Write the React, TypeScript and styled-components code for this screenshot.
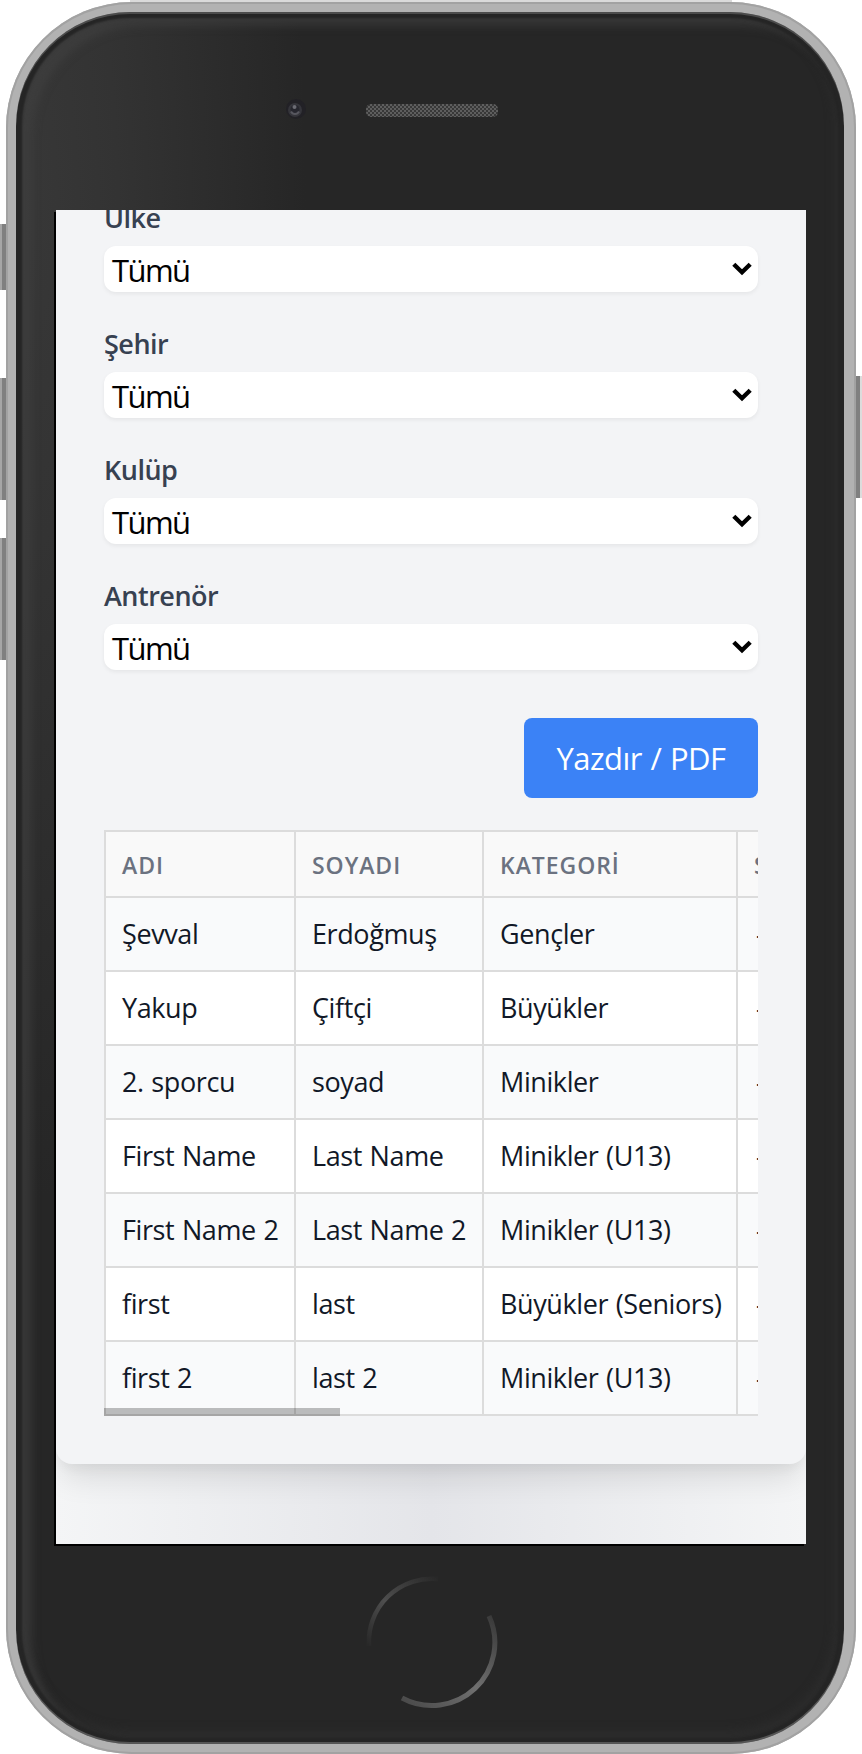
import React from 'react';
import styled, { createGlobalStyle } from 'styled-components';

const GlobalStyle = createGlobalStyle`
  *, *::before, *::after { box-sizing: border-box; }
  body { margin: 0; background: #fff; font-family: "Open Sans", "Noto Sans", sans-serif; }
`;

const Stage = styled.div`
  position: relative;
  width: 862px;
  height: 1754px;
  overflow: hidden;
  padding: 2px 6px 0;
`;

const SideButton = styled.div<{ $side: 'left' | 'right'; $top: number; $height: number }>`
  position: absolute;
  ${(p) => p.$side}: 0;
  top: ${(p) => p.$top}px;
  width: 8px;
  height: ${(p) => p.$height}px;
  background: linear-gradient(
    to ${(p) => (p.$side === 'left' ? 'right' : 'left')},
    ${(p) => (p.$side === 'left' ? '#a6a6a6' : '#dcdcdc')} 0 2px,
    #808080 2px
  );
`;

const Frame = styled.div`
  position: relative;
  width: 850px;
  height: 1752px;
  padding: 10px;
  border-radius: 126px;
  background: #b2b2b2;
  box-shadow: inset 0 0 0 2px #a2a2a2;

  &::before {
    content: '';
    position: absolute;
    top: -2px;
    left: 124px;
    right: 124px;
    height: 2px;
    background: #dadada;
  }
`;

const Glass = styled.div`
  display: flex;
  flex-direction: column;
  width: 828px;
  height: 1732px;
  padding: 0 38px 0 40px;
  border-radius: 114px;
  background: radial-gradient(ellipse 290px 1000px at 0 190px, #383838, #333 35%, #262626 100%) #262626;
  box-shadow:
    inset 0 2px 0 #4c4c4c,
    inset 0 -2px 0 #555,
    inset 0 0 2px 6px #252525,
    inset 12px 10px 8px 4px rgba(68, 68, 68, 0.55),
    inset -2px -6px 8px 8px rgba(46, 46, 46, 0.7);
`;

const TopBezel = styled.div`
  display: grid;
  grid-template-columns: 1fr 132px 1fr;
  align-items: center;
  height: 198px;
  flex: none;
  padding-left: 1px;
`;

const Lens = styled.svg`
  justify-self: end;
  margin: -2px 59px 0 0;
`;

const BottomBezel = styled.div`
  display: flex;
  flex: 1;
  justify-content: center;
  padding: 32px 0 0 2px;
`;

const Screen = styled.main`
  width: 750px;
  height: 1334px;
  flex: none;
  overflow: hidden;
  background: linear-gradient(to right, #f4f5f6, #e4e5e9 50%, #f4f5f6);
  box-shadow: -2px 2px 0 #000;
`;

const Panel = styled.section`
  height: 1254px;
  padding: 0 48px;
  border-radius: 0 0 16px 16px;
  background: #f3f4f6;
  box-shadow: 0 20px 30px -6px rgba(0, 0, 0, 0.1), 0 8px 12px -4px rgba(0, 0, 0, 0.05);
`;

const Filters = styled.div`
  display: flex;
  flex-direction: column;
  gap: 32px;
`;

const Field = styled.label`
  display: flex;
  flex-direction: column;
  gap: 8px;

  /* The list is scrolled, so the first caption runs under the top edge. */
  &:first-child { margin-top: -12px; }
`;

const FieldLabel = styled.span`
  height: 40px;
  color: #374151;
  font-size: 27px;
  font-weight: 600;
  line-height: 40px;
  letter-spacing: -0.5px;
  white-space: nowrap;
`;

const SelectBox = styled.span`
  display: flex;
  align-items: center;
  justify-content: space-between;
  height: 46px;
  padding: 0 6px 0 8px;
  border-radius: 12px;
  background: #fff;
  box-shadow: 0 2px 4px rgba(0, 0, 0, 0.06);
  color: #000;
  font-size: 31px;
  line-height: 46px;
  letter-spacing: -1.6px;
`;

const SelectValue = styled.span`
  padding-top: 2px;
`;

const Chevron = styled.svg`
  margin-top: -1px;
`;

const Actions = styled.div`
  display: flex;
  justify-content: flex-end;
  padding: 48px 0 32px;
`;

const PrintButton = styled.button`
  width: 234px;
  height: 80px;
  padding: 0;
  border: 0;
  border-radius: 8px;
  background: #3b82f6;
  color: #fff;
  font: 400 31px/48px "Open Sans", "Noto Sans", sans-serif;
  letter-spacing: -0.5px;
  word-spacing: 1px;
  white-space: nowrap;
`;

const TableViewport = styled.div`
  position: relative;
  width: 654px;
  overflow: hidden;
`;

const Table = styled.table`
  width: 930px;
  table-layout: fixed;
  border-spacing: 0;
  border-left: 2px solid #dcdcdc;
  border-top: 2px solid #dcdcdc;
`;

const HeadCell = styled.th`
  height: 66px;
  padding: 1px 16px 0;
  border-right: 2px solid #dcdcdc;
  border-bottom: 2px solid #dcdcdc;
  background: #f9f9f9;
  color: #6b7280;
  font-size: 23px;
  font-weight: 600;
  line-height: 32px;
  letter-spacing: 0.95px;
  text-align: left;
  white-space: nowrap;
`;

const Row = styled.tr`
  background: #fff;
  &:nth-child(odd) { background: #f9fafb; }
`;

const Cell = styled.td`
  height: 74px;
  padding: 0 16px;
  border-right: 2px solid #dcdcdc;
  border-bottom: 2px solid #dcdcdc;
  color: #111827;
  font-size: 27px;
  line-height: 40px;
  letter-spacing: -0.4px;
  word-spacing: 1px;
  white-space: nowrap;

  &:last-child { padding-left: 18px; }
`;

const ScrollThumb = styled.div`
  position: absolute;
  left: 0;
  bottom: 0;
  width: 236px;
  height: 8px;
  background: rgba(0, 0, 0, 0.25);
`;

const filters = ['Ülke', 'Şehir', 'Kulüp', 'Antrenör'];
const columns = ['ADI', 'SOYADI', 'KATEGORİ', 'SIKLET'];
const athletes = [
  ['Şevval', 'Erdoğmuş', 'Gençler', '-'],
  ['Yakup', 'Çiftçi', 'Büyükler', '-'],
  ['2. sporcu', 'soyad', 'Minikler', '-'],
  ['First Name', 'Last Name', 'Minikler (U13)', '-'],
  ['First Name 2', 'Last Name 2', 'Minikler (U13)', '-'],
  ['first', 'last', 'Büyükler (Seniors)', '-'],
  ['first 2', 'last 2', 'Minikler (U13)', '-'],
];

function Camera() {
  return (
    <Lens width="24" height="24" viewBox="0 0 24 24">
      <circle cx="13" cy="11" r="10" fill="#222126" />
      <circle cx="12" cy="12" r="7" fill="#35353b" />
      <circle cx="12" cy="11.5" r="4.5" fill="#26262e" />
      <path d="M8 13.5a4.5 4.5 0 0 0 8 0" fill="none" stroke="#57575f" strokeWidth="2" />
      <circle cx="11.5" cy="9" r="2" fill="#6c6c74" />
    </Lens>
  );
}

function Speaker() {
  return (
    <svg width="132" height="14" viewBox="0 0 132 14">
      <defs>
        <pattern id="mesh" width="4" height="4" patternUnits="userSpaceOnUse">
          <rect width="4" height="4" fill="#383838" />
          <rect width="2" height="2" fill="#5e5e5e" />
          <rect x="2" y="2" width="2" height="2" fill="#5e5e5e" />
        </pattern>
      </defs>
      <rect width="132" height="13" rx="5" fill="url(#mesh)" />
    </svg>
  );
}

function HomeButton() {
  return (
    <svg width="132" height="134" viewBox="0 0 132 134" fill="none">
      <defs>
        <linearGradient id="rimTop" x1="0" y1="1" x2="1" y2="0">
          <stop offset="0" stopColor="#282828" />
          <stop offset="0.45" stopColor="#4e4e4e" />
          <stop offset="1" stopColor="#282828" />
        </linearGradient>
        <linearGradient id="rimBottom" x1="1" y1="0" x2="0" y2="1">
          <stop offset="0" stopColor="#383838" />
          <stop offset="0.5" stopColor="#707070" />
          <stop offset="1" stopColor="#484848" />
        </linearGradient>
      </defs>
      <path d="M3 70A63 63 0 0 1 72 3" stroke="url(#rimTop)" strokeWidth="4.5" />
      <path d="M123 40A63 63 0 0 1 36 122" stroke="url(#rimBottom)" strokeWidth="5" />
    </svg>
  );
}

export default function App() {
  return (
    <>
      <GlobalStyle />
      <Stage>
        <SideButton $side="left" $top={224} $height={66} />
        <SideButton $side="left" $top={378} $height={122} />
        <SideButton $side="left" $top={538} $height={122} />
        <SideButton $side="right" $top={376} $height={122} />
        <Frame>
          <Glass>
            <TopBezel>
              <Camera />
              <Speaker />
            </TopBezel>
            <Screen>
              <Panel>
                <Filters>
                  {filters.map((name) => (
                    <Field key={name}>
                      <FieldLabel>{name}</FieldLabel>
                      <SelectBox>
                        <SelectValue>Tümü</SelectValue>
                        <Chevron width="20" height="14" viewBox="0 0 20 14">
                          <path d="M1.8 2.2 10 10.2 18.2 2.2" fill="none" stroke="#000" strokeWidth="4.4" />
                        </Chevron>
                      </SelectBox>
                    </Field>
                  ))}
                </Filters>
                <Actions>
                  <PrintButton>Yazdır / PDF</PrintButton>
                </Actions>
                <TableViewport>
                  <Table>
                    <colgroup>
                      <col style={{ width: 190 }} />
                      <col style={{ width: 188 }} />
                      <col style={{ width: 254 }} />
                      <col />
                    </colgroup>
                    <thead>
                      <tr>
                        {columns.map((c) => (
                          <HeadCell key={c}>{c}</HeadCell>
                        ))}
                      </tr>
                    </thead>
                    <tbody>
                      {athletes.map((row) => (
                        <Row key={row[0]}>
                          {row.map((value, i) => (
                            <Cell key={i}>{value}</Cell>
                          ))}
                        </Row>
                      ))}
                    </tbody>
                  </Table>
                  <ScrollThumb />
                </TableViewport>
              </Panel>
            </Screen>
            <BottomBezel>
              <HomeButton />
            </BottomBezel>
          </Glass>
        </Frame>
      </Stage>
    </>
  );
}
